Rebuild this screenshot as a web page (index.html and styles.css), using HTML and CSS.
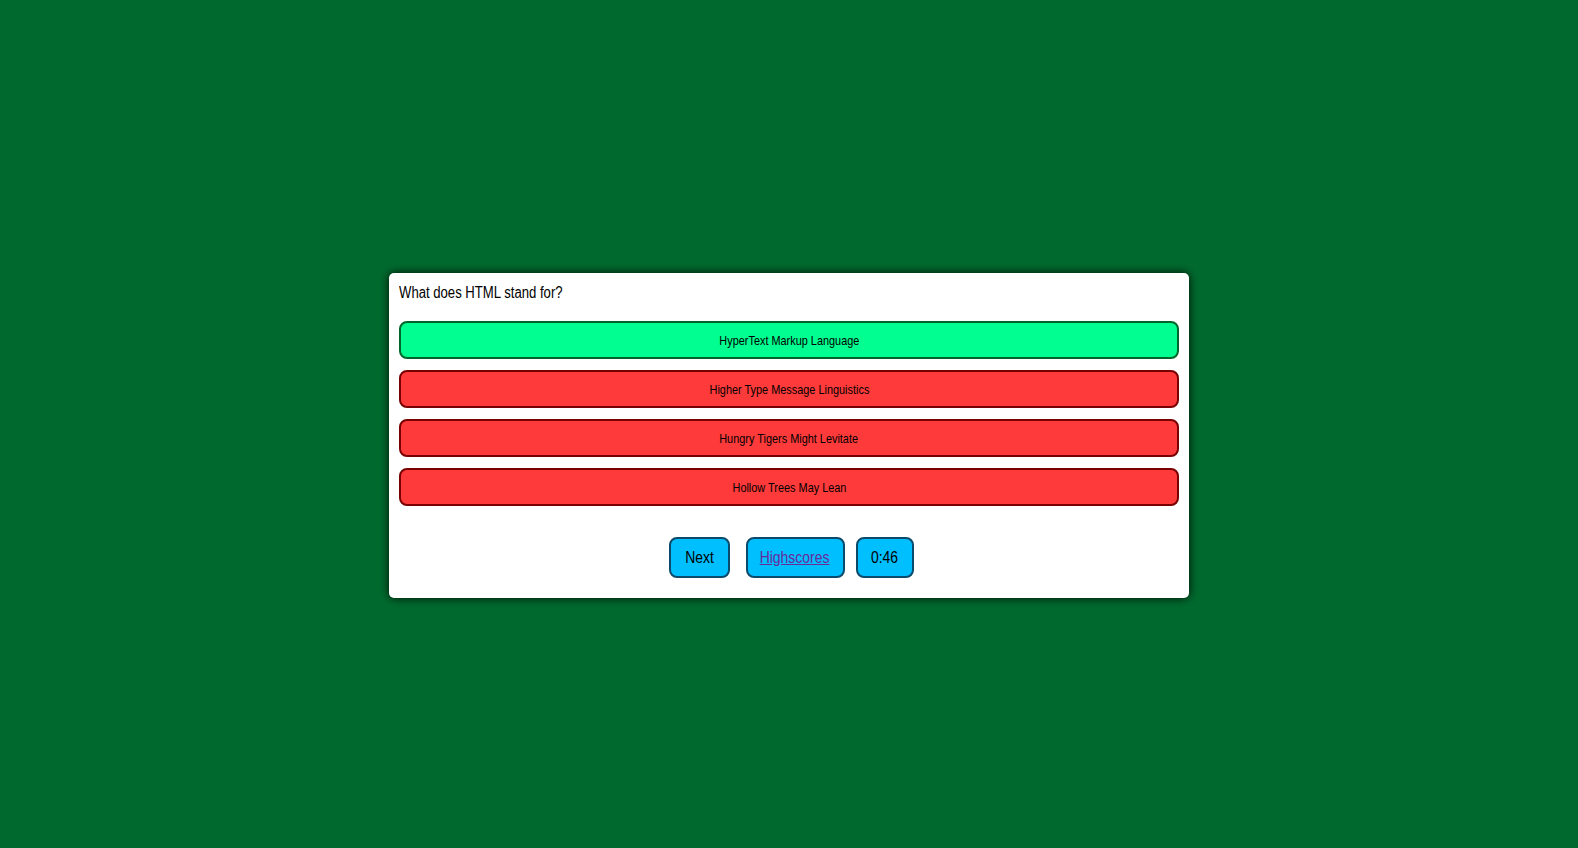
FILE: index.html
```html
<!DOCTYPE html>
<html>
<head>
<meta charset="utf-8">
<link rel="stylesheet" href="styles.css">
</head>
<body>
<div class="card">
  <div class="question"><span class="narrow left">What does HTML stand for?</span></div>
  <div class="answers">
    <button class="answer correct"><span class="narrow">HyperText Markup Language</span></button>
    <button class="answer wrong"><span class="narrow">Higher Type Message Linguistics</span></button>
    <button class="answer wrong"><span class="narrow">Hungry Tigers Might Levitate</span></button>
    <button class="answer wrong"><span class="narrow">Hollow Trees May Lean</span></button>
  </div>
  <div class="controls">
    <button class="ctrl next"><span class="narrow">Next</span></button>
    <button class="ctrl scores"><a href="#" class="link narrow">Highscores</a></button>
    <div class="ctrl timer"><span class="narrow">0:46</span></div>
  </div>
</div>
</body>
</html>
```
FILE: styles.css
```css
html, body {
  margin: 0;
  padding: 0;
}
body {
  background: #006a2e;
  min-height: 848px;
  display: flex;
  justify-content: center;
  align-items: flex-start;
  padding-top: 273px;
  box-sizing: border-box;
  font-family: "Liberation Sans", Arial, sans-serif;
}
.narrow {
  display: inline-block;
  transform: scaleX(0.82);
  transform-origin: center center;
  white-space: nowrap;
}
.narrow.left {
  transform-origin: left center;
}
.card {
  width: 800px;
  box-sizing: border-box;
  background: #ffffff;
  border-radius: 5px;
  box-shadow: 0 0 10px rgba(0, 0, 0, 0.9);
  padding: 10px 10px 20px 10px;
}
.question {
  font-size: 16px;
  line-height: 19px;
  color: #000;
  margin-bottom: 19px;
}
.answers {
  display: flex;
  flex-direction: column;
  gap: 11px;
}
.answer {
  height: 38px;
  width: 100%;
  border-radius: 8px;
  border: 2px solid;
  font-family: inherit;
  font-size: 13.3px;
  color: #000;
  padding: 0;
}
.correct {
  background: #00ff90;
  border-color: #00662a;
}
.wrong {
  background: #ff3a3a;
  border-color: #780000;
}
.controls {
  margin-top: 31px;
  display: flex;
  justify-content: center;
  padding-left: 4px;
}
.ctrl {
  height: 41px;
  box-sizing: border-box;
  background: #00bfff;
  border: 2px solid #0b4a6b;
  border-radius: 8px;
  font-family: inherit;
  font-size: 17px;
  color: #000;
  display: flex;
  align-items: center;
  justify-content: center;
  padding: 0;
}
.next {
  width: 61px;
  margin-right: 16px;
}
.scores {
  width: 99px;
  margin-right: 11px;
}
.timer {
  width: 58px;
}
.link {
  color: #6a2a9a;
  text-decoration: underline;
}
```
